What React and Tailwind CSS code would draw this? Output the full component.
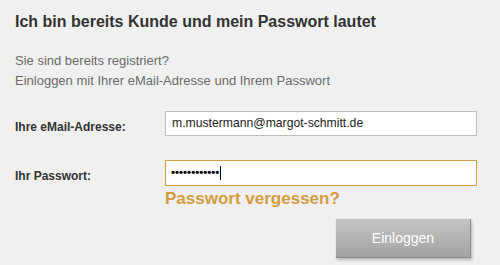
import React from "react";

export default function App() {
  return (
    <div className="w-[500px] h-[265px] overflow-hidden bg-[#f0f0f0] pl-[15px] pt-[12px] font-['Liberation_Sans',Arial,sans-serif]">
      <h2 className="text-[16px] leading-[20px] font-bold text-[#333]">
        Ich bin bereits Kunde und mein Passwort lautet
      </h2>

      <div className="mt-[19px] text-[13px] leading-[20px] text-[#6b6b6b]">
        <p>Sie sind bereits registriert?</p>
        <p>Einloggen mit Ihrer eMail-Adresse und Ihrem Passwort</p>
      </div>

      <div className="mt-[20px] flex">
        <label className="w-[150px] pt-[8px] text-[12px] leading-[16px] font-bold text-[#333]">
          Ihre eMail-Adresse:
        </label>
        <div className="w-[312px] h-[25px] border border-[#bdbdbd] bg-white px-[6px] flex items-center text-[12.2px] text-[#222]">
          m.mustermann@margot-schmitt.de
        </div>
      </div>

      <div className="mt-[24px] flex">
        <label className="w-[150px] pt-[8px] text-[12px] leading-[16px] font-bold text-[#333]">
          Ihr Passwort:
        </label>
        <div className="w-[312px] h-[26px] border border-[#d5a043] bg-white pl-[5px] flex items-center">
          <span className="text-[11.5px] leading-none text-black font-bold">
            ••••••••••••
          </span>
          <span className="ml-[1px] w-[1px] h-[14px] bg-black" />
        </div>
      </div>

      <div className="pl-[150px] mt-[1px]">
        <a className="text-[17px] leading-[20px] font-bold text-[#d49c3f] cursor-pointer">
          Passwort vergessen?
        </a>
      </div>

      <div className="mt-[8px] flex justify-end pr-[29px]">
        <button className="w-[135px] h-[39px] bg-gradient-to-b from-[#c6c6c6] to-[#a2a2a2] border-r border-b border-[#8a8a8a] shadow-[1px_2px_3px_rgba(0,0,0,0.25)] text-white text-[14px] flex items-center justify-center">
          Einloggen
        </button>
      </div>
    </div>
  );
}
